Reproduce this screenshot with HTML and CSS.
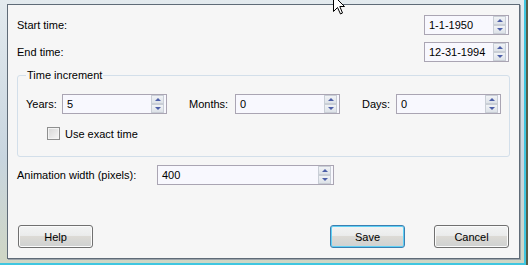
FILE: index.html
```html
<!DOCTYPE html>
<html lang="en">
<head>
	<meta charset="UTF-8">
	<title>Animation settings</title>
	<link rel="stylesheet" href="styles.css">
</head>
<body>
	<div class="glass">
		<div class="dialog">
			<div class="row">
				<span class="label">Start time:</span>
				<div class="spin date"><span class="val">1-1-1950</span><div class="arrows"><i class="up"></i><i class="down"></i></div></div>
			</div>
			<div class="row gap">
				<span class="label">End time:</span>
				<div class="spin date"><span class="val">12-31-1994</span><div class="arrows"><i class="up"></i><i class="down"></i></div></div>
			</div>
			<fieldset class="group">
				<legend>Time increment</legend>
				<div class="fields">
					<div class="field">
						<span class="label years">Years:</span>
						<div class="spin num"><span class="val">5</span><div class="arrows"><i class="up"></i><i class="down"></i></div></div>
					</div>
					<div class="field">
						<span class="label months">Months:</span>
						<div class="spin num"><span class="val">0</span><div class="arrows"><i class="up"></i><i class="down"></i></div></div>
					</div>
					<div class="field">
						<span class="label days">Days:</span>
						<div class="spin num"><span class="val">0</span><div class="arrows"><i class="up"></i><i class="down"></i></div></div>
					</div>
				</div>
				<label class="check"><span class="box"></span>Use exact time</label>
			</fieldset>
			<div class="row anim">
				<span class="label wide">Animation width (pixels):</span>
				<div class="spin width"><span class="val">400</span><div class="arrows"><i class="up"></i><i class="down"></i></div></div>
			</div>
			<div class="buttons">
				<button class="btn">Help</button>
				<div class="right">
					<button class="btn default">Save</button>
					<button class="btn">Cancel</button>
				</div>
			</div>
		</div>
		<svg class="cursor" width="13" height="20" viewBox="0 0 13 20">
			<path d="M0.5 0.5 L0.5 16.5 L4.5 12.5 L7.5 19 L9.5 18 L6.8 11.5 L11.5 11.5 Z" fill="#fff" stroke="#000" stroke-width="1"/>
		</svg>
	</div>
</body>
</html>
```

FILE: styles.css
```css
* { margin: 0; padding: 0; box-sizing: border-box; }
body {
	background: #56604a;
	font: 11px "Liberation Sans", Arial, sans-serif;
	color: #000;
	width: 528px;
	height: 265px;
	overflow: hidden;
}
.glass {
	position: relative;
	width: 526px;
	height: 265px;
	padding: 4px 4px 4px 7px;
	background: linear-gradient(180deg, #e3eaee 0%, #c8d5df 60%, #cfd6c4 100%);
	border-right: 2px solid #3fc6e0;
	border-bottom: 2px solid #3fc6e0;
}
.dialog {
	height: 100%;
	background: #f6f6f6;
	border: 1px solid #5f6b77;
	box-shadow: 1px 1px 0 #9aa3aa;
	padding: 10px 10px 10px 9px;
	display: flex;
	flex-direction: column;
}
.row {
	display: flex;
	align-items: center;
	justify-content: space-between;
	height: 20px;
}
.row.gap { margin-top: 7px; }
.label { white-space: nowrap; }

.spin {
	display: flex;
	align-items: stretch;
	height: 20px;
	border: 1px solid #aaa5b3;
	background: #f8f8fe;
}
.spin .val {
	flex: 1;
	padding-left: 4px;
	line-height: 18px;
}
.spin .arrows {
	width: 13px;
	margin-right: 2px;
	display: flex;
	flex-direction: column;
}
.spin .arrows i {
	flex: 1;
	position: relative;
	background: linear-gradient(#f1f3f6, #dde2e8);
	border: 1px solid #c9ced6;
}
.spin .arrows i::after {
	content: '';
	position: absolute;
	left: 3px;
	top: 2px;
	border-left: 3px solid transparent;
	border-right: 3px solid transparent;
}
.spin .arrows .up::after { border-bottom: 3px solid #4d5fa8; }
.spin .arrows .down::after { border-top: 3px solid #4d5fa8; }
.spin.date { width: 85px; }
.spin.num { width: 105px; }
.spin.width { width: 177px; }

.group {
	margin-top: 7px;
	border: 1px solid #d3dfea;
	border-radius: 3px;
	padding: 12px 8px 16px 8px;
}
.group legend {
	padding: 0 1px;
	line-height: 13px;
}
.fields {
	display: flex;
	align-items: center;
	gap: 22px;
}
.field {
	display: flex;
	align-items: center;
}
.label.years { width: 36px; }
.label.months { width: 46px; }
.label.days { width: 34px; }

.check {
	display: flex;
	align-items: center;
	margin: 13px 0 0 21px;
	height: 13px;
}
.check .box {
	width: 13px;
	height: 13px;
	margin-right: 5px;
	border: 1px solid #8e8f8f;
	background: linear-gradient(135deg, #d6d6d6, #f7f7f7);
	box-shadow: inset 0 0 0 1px #f4f4f4;
}

.row.anim { margin-top: 8px; justify-content: flex-start; }
.label.wide { width: 140px; }

.buttons {
	margin-top: auto;
	display: flex;
	justify-content: space-between;
	padding-left: 1px;
}
.buttons .right {
	display: flex;
	gap: 29px;
}
.btn {
	width: 75px;
	height: 23px;
	font: 11px "Liberation Sans", Arial, sans-serif;
	color: #000;
	border: 1px solid #707070;
	border-radius: 3px;
	background: linear-gradient(#f2f3f3 0%, #ebecec 45%, #dcdad5 50%, #cfd1d1 100%);
	box-shadow: inset 0 0 0 1px #fbfbfb;
}
.btn.default {
	border-color: #3c7fb1;
	box-shadow: inset 0 0 0 1px #5fd0f5;
}
.cursor {
	position: absolute;
	left: 333px;
	top: -5px;
}
```
